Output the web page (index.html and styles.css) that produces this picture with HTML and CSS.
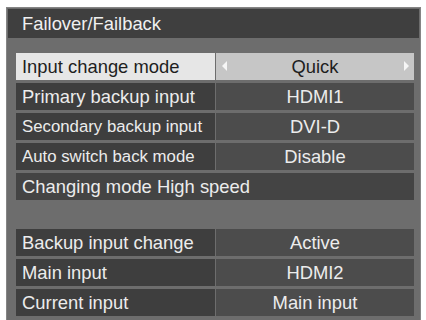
FILE: index.html
```html
<!DOCTYPE html>
<html>
<head>
<meta charset="utf-8">
<link rel="stylesheet" href="styles.css">
</head>
<body>
<div class="panel">
  <div class="title">Failover/Failback</div>
  <div class="group first">
    <div class="row active">
      <div class="label">Input change mode</div>
      <div class="value"><span class="arrow left"></span>Quick<span class="arrow right"></span></div>
    </div>
    <div class="row">
      <div class="label">Primary backup input</div>
      <div class="value">HDMI1</div>
    </div>
    <div class="row">
      <div class="label small">Secondary backup input</div>
      <div class="value">DVI-D</div>
    </div>
    <div class="row">
      <div class="label small">Auto switch back mode</div>
      <div class="value">Disable</div>
    </div>
    <div class="row">
      <div class="label wide">Changing mode High speed</div>
    </div>
  </div>
  <div class="group second">
    <div class="row">
      <div class="label">Backup input change</div>
      <div class="value">Active</div>
    </div>
    <div class="row">
      <div class="label">Main input</div>
      <div class="value">HDMI2</div>
    </div>
    <div class="row">
      <div class="label">Current input</div>
      <div class="value">Main input</div>
    </div>
  </div>
</div>
</body>
</html>
```
FILE: styles.css
```css
html, body {
  margin: 0;
  padding: 0;
  background: #ffffff;
}
body {
  font-family: "Liberation Sans", Arial, sans-serif;
  overflow: hidden;
  width: 426px;
  height: 320px;
}
.panel {
  margin: 7px 0 0 6px;
  width: 411px;
  height: 320px;
  padding: 2px;
  background: #6d6d6d;
  box-shadow: inset 0 0 0 1px #858585;
}
.title {
  height: 29px;
  background: #3f3f3f;
  color: #f0f0f0;
  font-size: 18.4px;
  line-height: 30px;
  padding-left: 14px;
}
.group {
  display: flex;
  flex-direction: column;
  gap: 3px;
  margin: 0 5px 0 8px;
}
.group.first {
  margin-top: 15px;
}
.group.second {
  margin-top: 29px;
}
.row {
  display: grid;
  grid-template-columns: 199px 1fr;
  column-gap: 1px;
  height: 27px;
  color: #ececec;
  font-size: 18.4px;
}
.label {
  background: #3e3e3e;
  padding-left: 6px;
  line-height: 27px;
  white-space: nowrap;
}
.label.small {
  font-size: 16.8px;
}
.label.wide {
  grid-column: 1 / 3;
  background: #444444;
}
.value {
  background: #4c4c4c;
  text-align: center;
  line-height: 27px;
  position: relative;
}
.row.active .label {
  background: #e6e6e6;
  color: #1e1e1e;
}
.row.active .value {
  background: #c6c6c6;
  color: #1e1e1e;
}
.arrow {
  position: absolute;
  top: 8px;
  width: 0;
  height: 0;
  border-top: 5px solid transparent;
  border-bottom: 5px solid transparent;
}
.arrow.left {
  left: 6px;
  border-right: 5px solid #f6f6f6;
}
.arrow.right {
  right: 5px;
  border-left: 5px solid #f6f6f6;
}
```
